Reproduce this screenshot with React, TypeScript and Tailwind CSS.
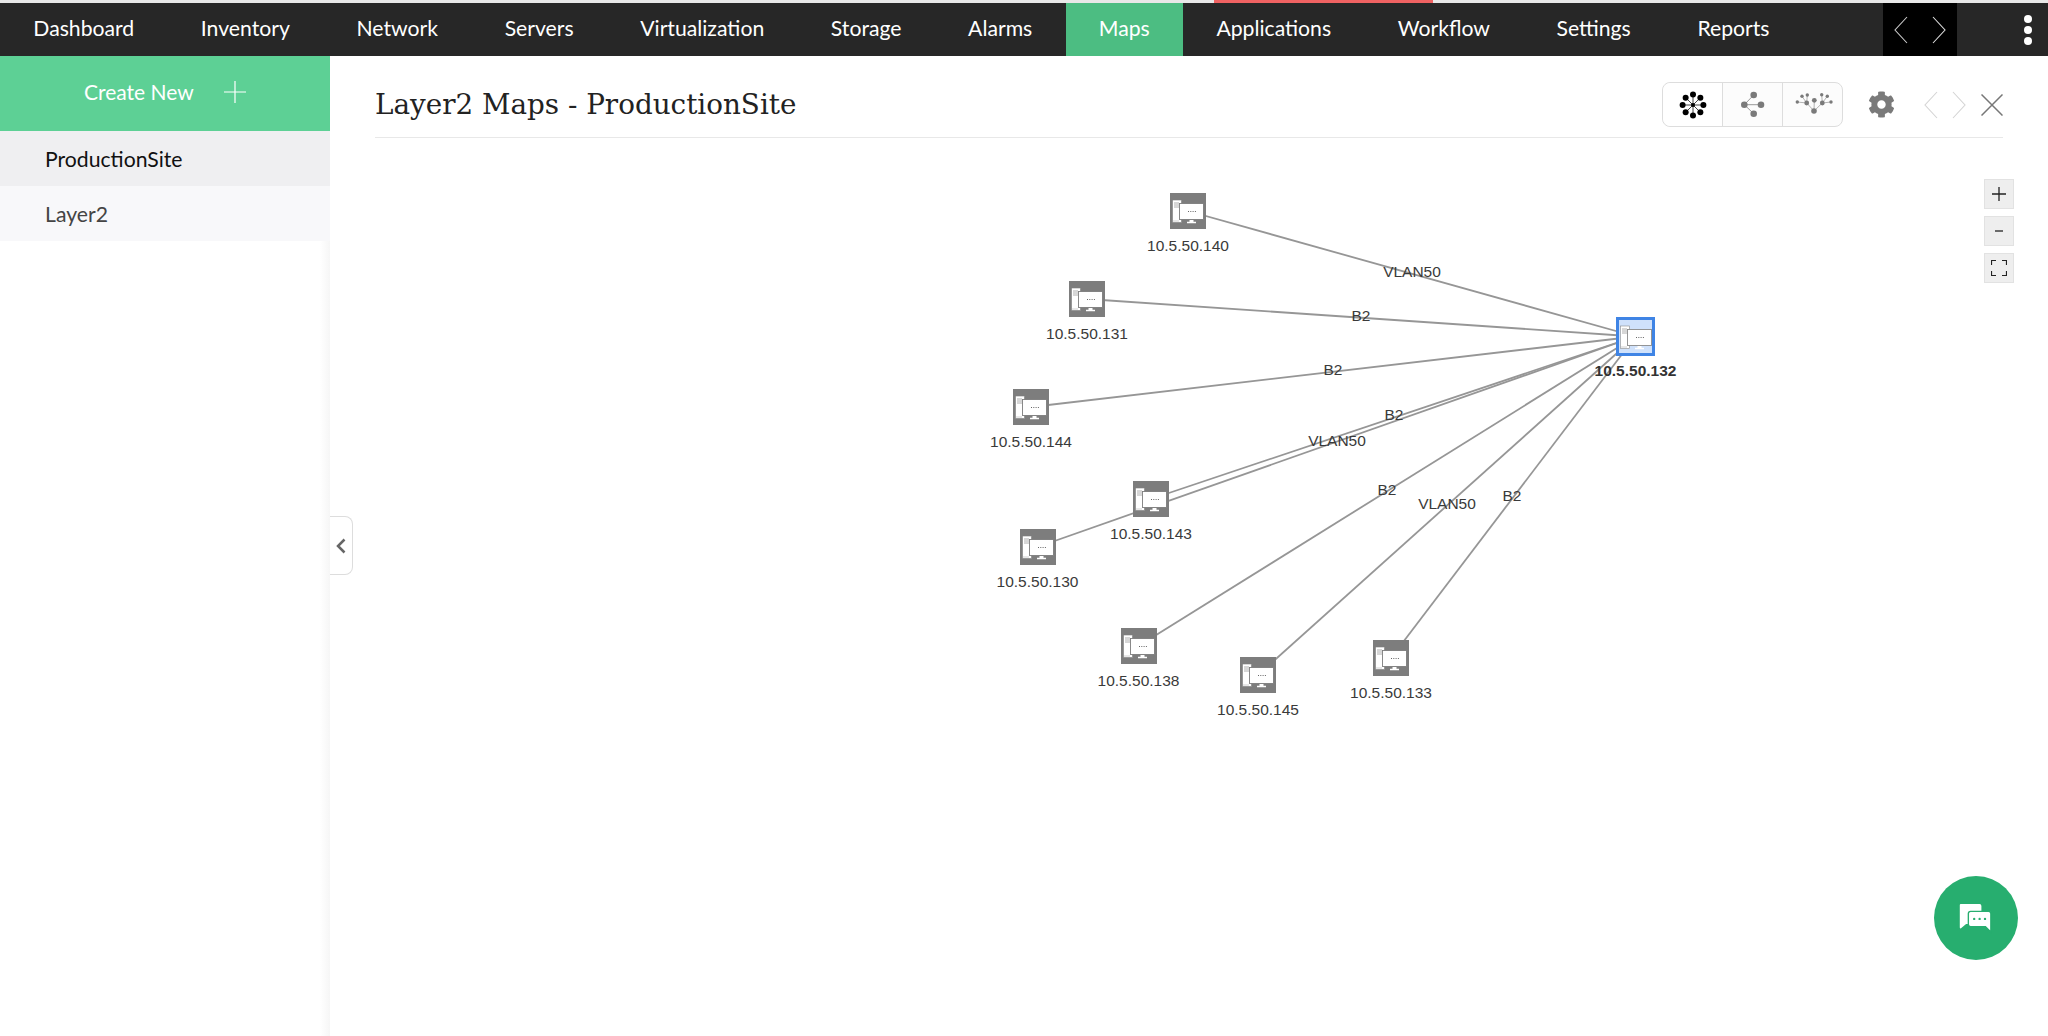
import { FaCog } from 'react-icons/fa';

const MAP_LEFT = 330;
const MAP_TOP = 138;

const navItems = ['Dashboard', 'Inventory', 'Network', 'Servers', 'Virtualization', 'Storage', 'Alarms', 'Maps', 'Applications', 'Workflow', 'Settings', 'Reports'];

const hub = { x: 1635.5, y: 336.5, ip: '10.5.50.132' };

const nodes = [
    { ip: '10.5.50.140', x: 1188, y: 211 },
    { ip: '10.5.50.131', x: 1087, y: 299 },
    { ip: '10.5.50.144', x: 1031, y: 407 },
    { ip: '10.5.50.143', x: 1151, y: 499 },
    { ip: '10.5.50.130', x: 1037.5, y: 547 },
    { ip: '10.5.50.138', x: 1138.5, y: 646 },
    { ip: '10.5.50.145', x: 1258, y: 675 },
    { ip: '10.5.50.133', x: 1391, y: 658 },
];

const edgeLabels = [
    { text: 'VLAN50', x: 1412, y: 272 },
    { text: 'B2', x: 1361, y: 316 },
    { text: 'B2', x: 1333, y: 370 },
    { text: 'B2', x: 1394, y: 415 },
    { text: 'VLAN50', x: 1337, y: 441 },
    { text: 'B2', x: 1387, y: 490 },
    { text: 'VLAN50', x: 1447, y: 504 },
    { text: 'B2', x: 1512, y: 496 },
];

function HostGlyph({ outline }: { outline: string }) {
    return (
        <svg width="36" height="36" viewBox="0 0 36 36" className="block">
            <rect x="2.5" y="7" width="9" height="22.5" fill="#fff" stroke={outline} strokeWidth="0.6" />
            <path d="M4 10h5M4 12h5M4 14h5" stroke="#999" strokeWidth="0.8" />
            <path d="M3.500 28h1M5.500 28h1M7.500 28h1" stroke="#888" strokeWidth="0.8" />
            <rect x="9.5" y="10.5" width="24" height="16" fill="#fff" stroke={outline} strokeWidth="0.9" />
            <path d="M18 18.500h8" stroke="#666" strokeWidth="1.200" strokeDasharray="1 1.300" />
            <path d="M19.500 27h4v1.800h2.500v1.400h-9v-1.400h2.500z" fill="#fff" />
        </svg>
    );
}

function MapNode({ ip, x, y }: { ip: string; x: number; y: number }) {
    return (
        <div
            className="absolute flex w-[120px] -translate-x-1/2 flex-col items-center"
            style={{ left: x - MAP_LEFT, top: y - MAP_TOP - 18 }}
        >
            <div className="h-9 w-9 bg-[#7d7d7d]">
                <HostGlyph outline="#7d7d7d" />
            </div>
            <span className="mt-[8px] text-[15.500px] leading-[18px] text-[#3a3a3a]">{ip}</span>
        </div>
    );
}

function HubNode() {
    return (
        <div
            className="absolute flex w-[120px] -translate-x-1/2 flex-col items-center"
            style={{ left: hub.x - MAP_LEFT, top: hub.y - MAP_TOP - 19.5 }}
        >
            <div className="h-[39px] w-[39px] border-[3px] border-[#3f84e5] bg-[#cfe1fb]">
                <div className="-m-[1.5px]">
                    <HostGlyph outline="#8a8a8a" />
                </div>
            </div>
            <span className="mt-[6px] text-[15.500px] leading-[18px] font-bold text-[#333]">{hub.ip}</span>
        </div>
    );
}

function StarIcon() {
    const spokes = [0, 45, 90, 135, 180, 225, 270, 315].map((a) => {
        const r = (a * Math.PI) / 180;
        return { x: 14 + 10.4 * Math.cos(r), y: 14 + 10.4 * Math.sin(r) };
    });
    return (
        <svg width="28" height="28" viewBox="0 0 28 28">
            {spokes.map((p, i) => (
                <g key={i}>
                    <line x1="14" y1="14" x2={p.x} y2={p.y} stroke="#444" strokeWidth="1" />
                    <circle cx={p.x} cy={p.y} r="3" fill="#000" />
                </g>
            ))}
            <circle cx="14" cy="14" r="2" fill="#000" />
        </svg>
    );
}

function ShareIcon() {
    return (
        <svg width="28" height="28" viewBox="0 0 28 28">
            <path d="M5.300 13.700L14.700 4M5.300 13.700H22M5.300 13.700L14.700 22.700" stroke="#999" strokeWidth="1" fill="none" />
            <circle cx="5.300" cy="13.700" r="3.300" fill="#7a7a7a" />
            <circle cx="14.700" cy="4" r="3.300" fill="#7a7a7a" />
            <circle cx="22" cy="13.700" r="3.300" fill="#7a7a7a" />
            <circle cx="14.700" cy="22.700" r="3.300" fill="#7a7a7a" />
        </svg>
    );
}

function TreeIcon() {
    return (
        <svg width="40" height="24" viewBox="0 0 40 24">
            <path d="M20 18L12.700 10M20 18L20.300 7.300M20 18L28.300 10M12.700 10L3.300 9M12.700 10L8 3.300M12.700 10L13.300 2M28.300 10L27.700 1.300M28.300 10L33.300 3.300M28.300 10L37 9" stroke="#aaa" strokeWidth="0.9" fill="none" />
            <circle cx="20" cy="18" r="2.800" fill="#7a7a7a" />
            <circle cx="12.700" cy="10" r="2.400" fill="#7a7a7a" />
            <circle cx="20.300" cy="7.300" r="2.400" fill="#7a7a7a" />
            <circle cx="28.300" cy="10" r="2.400" fill="#7a7a7a" />
            <circle cx="3.300" cy="9" r="1.700" fill="#7a7a7a" />
            <circle cx="8" cy="3.300" r="1.700" fill="#7a7a7a" />
            <circle cx="13.300" cy="2" r="1.700" fill="#7a7a7a" />
            <circle cx="27.700" cy="1.800" r="1.700" fill="#7a7a7a" />
            <circle cx="33.300" cy="3.300" r="1.700" fill="#7a7a7a" />
            <circle cx="37" cy="9" r="1.700" fill="#7a7a7a" />
        </svg>
    );
}

function Chevron({ dir, color, className }: { dir: 'left' | 'right'; color: string; className?: string }) {
    return (
        <svg width="14" height="28" viewBox="0 0 14 28" className={className}>
            <path d={dir === 'left' ? 'M13 1L1 14L13 27' : 'M1 1L13 14L1 27'} fill="none" stroke={color} strokeWidth="1.100" />
        </svg>
    );
}

function ChatIcon() {
    return (
        <svg width="36" height="33" viewBox="0 0 40 36">
            <path d="M3 2h21a2 2 0 0 1 2 2v18a2 2 0 0 1-2 2H9l-6 5a1 1 0 0 1 -1-1V3a1 1 0 0 1 1-1z" fill="#fff" />
            <path d="M14 10h20a2.500 2.500 0 0 1 2.500 2.500v20.500l-6-6H14a2.500 2.500 0 0 1-2.500-2.500v-12A2.500 2.500 0 0 1 14 10z" fill="#fff" stroke="#27ae6f" strokeWidth="1.500" />
            <circle cx="18" cy="18.500" r="1.300" fill="#27ae6f" />
            <circle cx="24" cy="18.500" r="1.300" fill="#27ae6f" />
            <circle cx="30" cy="18.500" r="1.300" fill="#27ae6f" />
        </svg>
    );
}

export default function App() {
    return (
        <div className="relative flex h-screen w-full flex-col overflow-hidden bg-white font-['Lato',sans-serif]">
            <div className="flex h-[3px] bg-[#e8e8e8]">
                <div className="ml-[1214px] w-[219px] bg-[#f06262]" />
            </div>

            <nav className="flex h-[53px] items-stretch bg-[#272727] text-white">
                {navItems.map((item) => (
                    <div
                        key={item}
                        className={`flex items-center px-[33.3px] pb-[2px] text-[21.2px] ${item === 'Maps' ? 'bg-[#4cbd82]' : ''}`}
                    >
                        {item}
                    </div>
                ))}
                <div className="ml-auto flex w-[74px] items-center justify-between bg-black px-[11px]">
                    <Chevron dir="left" color="#ccc" />
                    <Chevron dir="right" color="#ddd" />
                </div>
                <div className="flex w-[91px] flex-col items-end justify-center gap-[3px] pr-[16px]">
                    <span className="h-[8px] w-[8px] rounded-full bg-white" />
                    <span className="h-[8px] w-[8px] rounded-full bg-white" />
                    <span className="h-[8px] w-[8px] rounded-full bg-white" />
                </div>
            </nav>

            <div className="flex min-h-0 flex-1">
                <aside className="flex w-[330px] shrink-0 flex-col bg-[linear-gradient(to_right,#fff_320px,#f6f6f6_330px)]">
                    <div className="flex h-[75px] items-center bg-[#5dd095] pb-[3px] pl-[84px] text-[21px] text-white">
                        <span>Create New</span>
                        <svg width="22" height="22" viewBox="0 0 22 22" className="ml-[30px]">
                            <path d="M11 0v22M0 11h22" stroke="#fff" strokeWidth="1.200" />
                        </svg>
                    </div>
                    <div className="flex h-[55px] items-center bg-[#efeff1] pt-[2px] pl-[45px] text-[21.2px] text-[#111]">ProductionSite</div>
                    <div className="flex h-[55px] items-center bg-[#f8f8fa] pt-[2px] pl-[45px] text-[21.2px] text-[#444]">Layer2</div>
                </aside>

                <main className="relative flex min-w-0 flex-1 flex-col">
                    <header className="mx-[45px] flex h-[82px] shrink-0 items-center justify-between border-b border-[#e8e8e8] pt-[16px]">
                        <h1 className="font-['DejaVu_Serif',serif] text-[27.8px] text-[#222]">Layer2 Maps - ProductionSite</h1>
                        <div className="flex items-center">
                            <div className="mr-[25px] flex h-[45px] w-[181px] rounded-[8px] border border-[#ddd] bg-[#fcfcfc]">
                                <div className="flex w-[59px] items-center justify-center rounded-l-[8px] bg-white"><StarIcon /></div>
                                <div className="flex w-[60px] items-center justify-center border-l border-[#ddd]"><ShareIcon /></div>
                                <div className="flex flex-1 items-center justify-center border-l border-[#ddd] pl-[3px]"><TreeIcon /></div>
                            </div>
                            <FaCog className="mr-[29px] text-[27px] text-[#7a7a7a]" />
                            <Chevron dir="left" color="#d4d4d4" />
                            <Chevron dir="right" color="#d4d4d4" className="ml-[14px]" />
                            <svg width="22" height="22" viewBox="0 0 22 22" className="ml-[15px]">
                                <path d="M0.500 0.500L21.500 21.500M21.500 0.500L0.500 21.500" stroke="#777" strokeWidth="1.500" />
                            </svg>
                        </div>
                    </header>

                    <div className="relative flex-1 font-['Liberation_Sans',Arial,sans-serif]">
                        <svg className="absolute inset-0 h-full w-full">
                            {nodes.map((n) => (
                                <line
                                    key={n.ip}
                                    x1={n.x - MAP_LEFT}
                                    y1={n.y - MAP_TOP}
                                    x2={hub.x - MAP_LEFT}
                                    y2={hub.y - MAP_TOP}
                                    stroke="#969696"
                                    strokeWidth="1.800"
                                />
                            ))}
                        </svg>
                        {edgeLabels.map((l) => (
                            <span
                                key={`${l.text}-${l.x}`}
                                className="absolute -translate-x-1/2 -translate-y-1/2 text-[15.500px] leading-[18px] text-[#3a3a3a]"
                                style={{ left: l.x - MAP_LEFT, top: l.y - MAP_TOP }}
                            >
                                {l.text}
                            </span>
                        ))}
                        {nodes.map((n) => (
                            <MapNode key={n.ip} {...n} />
                        ))}
                        <HubNode />

                        <div className="absolute top-[41px] right-[34px] flex flex-col gap-[7px]">
                            <button className="flex h-[30px] w-[30px] items-center justify-center border border-[#e2e2e2] bg-[#eee]">
                                <svg width="14" height="14" viewBox="0 0 14 14"><path d="M7 0v14M0 7h14" stroke="#222" strokeWidth="1.300" /></svg>
                            </button>
                            <button className="flex h-[30px] w-[30px] items-center justify-center border border-[#e2e2e2] bg-[#eee]">
                                <svg width="8" height="2" viewBox="0 0 8 2"><path d="M0 1h8" stroke="#222" strokeWidth="1.300" /></svg>
                            </button>
                            <button className="flex h-[30px] w-[30px] items-center justify-center border border-[#e2e2e2] bg-[#eee]">
                                <svg width="16" height="16" viewBox="0 0 16 16"><path d="M0.500 5V0.500H5M11 0.500h4.500V5M15.500 11v4.500H11M5 15.500H0.500V11" fill="none" stroke="#222" strokeWidth="1.200" /></svg>
                            </button>
                        </div>
                    </div>

                    <button className="absolute top-[460px] left-0 flex h-[59px] w-[23px] items-center justify-center rounded-r-[8px] border border-l-0 border-[#ddd] bg-white">
                        <svg width="10" height="16" viewBox="0 0 10 16"><path d="M8.500 1.500L2 8l6.500 6.500" fill="none" stroke="#666" strokeWidth="2.500" /></svg>
                    </button>
                </main>
            </div>

            <button className="absolute top-[876px] left-[1934px] flex h-[84px] w-[84px] items-center justify-center rounded-full bg-[#27ae6f]">
                <ChatIcon />
            </button>
        </div>
    );
}
